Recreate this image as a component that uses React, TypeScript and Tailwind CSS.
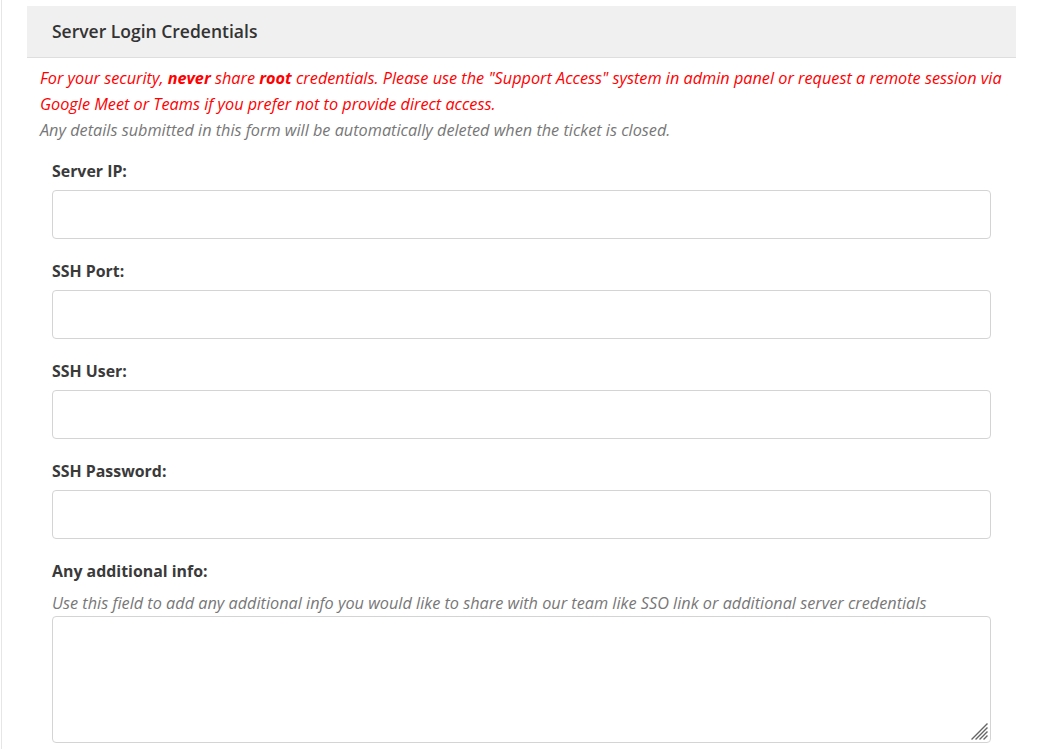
const fields = ['Server IP:', 'SSH Port:', 'SSH User:', 'SSH Password:'];

function ResizeGrip() {
  return (
    <svg
      className="absolute right-[3px] bottom-[3px] pointer-events-none"
      width="18"
      height="18"
      viewBox="0 0 18 18"
    >
      <g stroke="#666" strokeWidth="1.3" strokeLinecap="square">
        <line x1="17" y1="2" x2="2" y2="17" />
        <line x1="17" y1="6" x2="6" y2="17" />
        <line x1="17" y1="10" x2="10" y2="17" />
        <line x1="17" y1="14" x2="14" y2="17" />
      </g>
    </svg>
  );
}

export default function App() {
  return (
    <div
      className="min-h-screen bg-white ml-px border-l border-[#e6e6e6] pl-[25px] pt-[6px] text-[#333]"
      style={{ fontFamily: '"Open Sans", "Liberation Sans", sans-serif' }}
    >
      <div className="w-[989px]">
        <div className="h-[52px] bg-[#f0f0f0] border-b border-[#dedede] pl-[25px] flex items-center">
          <h2 className="text-[17.5px] font-semibold text-[#333] -mt-px">Server Login Credentials</h2>
        </div>

        <div className="px-[13px] pt-[7px]">
          <p className="text-[16.25px] leading-[26px] italic text-[#ff0000]">
            For your security, <b>never</b> share <b>root</b> credentials. Please use the "Support
            Access" system in admin panel or request a remote session via Google Meet or Teams if
            you prefer not to provide direct access.
          </p>
          <p className="text-[16.25px] leading-[26px] italic text-[#777]">
            Any details submitted in this form will be automatically deleted when the ticket is
            closed.
          </p>

          <div className="px-3 pt-[18px]">
            {fields.map((label) => (
              <div key={label} className="mb-[22px]">
                <label className="block text-[15.9px] leading-[20px] font-bold text-[#3a3a3a] mb-[9px]">
                  {label}
                </label>
                <input
                  type="text"
                  className="block w-full h-[49px] border border-[#d4d4d4] rounded bg-white outline-none"
                />
              </div>
            ))}

            <div>
              <label className="block text-[15.9px] leading-[20px] font-bold text-[#3a3a3a]">
                Any additional info:
              </label>
              <p className="mt-[9px] text-[16.25px] leading-[26px] italic text-[#777]">
                Use this field to add any additional info you would like to share with our team
                like SSO link or additional server credentials
              </p>
              <div className="relative">
                <textarea className="block w-full h-[127px] border border-[#d4d4d4] rounded bg-white outline-none resize-none" />
                <ResizeGrip />
              </div>
            </div>
          </div>
        </div>
      </div>
    </div>
  );
}
